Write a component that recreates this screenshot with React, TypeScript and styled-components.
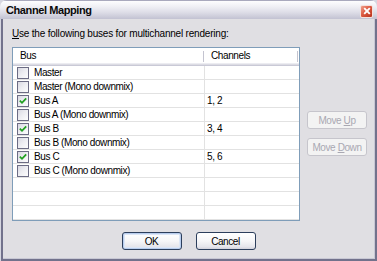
import React, { FC } from 'react';
import styled, { createGlobalStyle } from 'styled-components';

const GlobalStyle = createGlobalStyle`
    html, body {
        margin: 0;
        padding: 0;
        background: #d6d6e0;
    }

    body {
        font-family: 'Liberation Sans', Arial, sans-serif;
        font-size: 10px;
        letter-spacing: -0.4px;
        color: #000;
    }
`;

const Window = styled.div`
    width: 377px;
    height: 261px;
    display: flex;
    flex-direction: column;
    border-radius: 7px 7px 0 0;
    overflow: hidden;
    background: #d6d6e0;
`;

const TitleBar = styled.div`
    flex: none;
    height: 19px;
    box-sizing: border-box;
    display: flex;
    align-items: center;
    justify-content: space-between;
    padding: 0 4px 0 6px;
    border-top: 1px solid #a9a9bd;
    background: linear-gradient(#fdfdfe 0%, #f0f0f5 30%, #dcdce6 65%, #c2c2d2 100%);
`;

const Title = styled.span`
    font-weight: bold;
    font-size: 11px;
    letter-spacing: -0.4px;
    color: #0a0a0a;
`;

const CloseButton = styled.div`
    width: 13px;
    height: 13px;
    margin-top: 2px;
    box-sizing: border-box;
    border: 1px solid #f4e0dc;
    border-radius: 2px;
    background: linear-gradient(135deg, #f0a08c 0%, #dc5a42 45%, #b8321c 100%);
    display: flex;
    align-items: center;
    justify-content: center;
`;

const Frame = styled.div`
    flex: 1;
    display: flex;
    margin-left: 1px;
    border: solid #72728c;
    border-width: 0 2px 2px 2px;
    padding: 0 1px 1px 0;
    background: #c8c8d4;
`;

const Client = styled.div`
    flex: 1;
    display: flex;
    flex-direction: column;
    background: #e0dfe3;
`;

const Content = styled.div`
    padding: 8px 0 0 9px;
`;

const Label = styled.div`
    height: 14px;
    line-height: 14px;
    margin-bottom: 6px;
    letter-spacing: -0.2px;
`;

const MainRow = styled.div`
    display: flex;
    align-items: flex-start;
`;

const List = styled.div`
    width: 288px;
    height: 174px;
    box-sizing: border-box;
    border: 1px solid #7f9db9;
    background: #fff;
    overflow: hidden;
`;

const Header = styled.div`
    display: flex;
    height: 18px;
    background: #fff;
    box-shadow: inset 0 -1px #c9c9d6, inset 0 -2px #dcdce4, inset 0 -3px #ececf1;
`;

const HeaderCell = styled.div<{ width: number; pad: number }>`
    position: relative;
    width: ${({ width }): number => width}px;
    box-sizing: border-box;
    padding-left: ${({ pad }): number => pad}px;
    line-height: 16px;

    &::after {
        content: '';
        position: absolute;
        right: 1px;
        top: 3px;
        height: 11px;
        width: 1px;
        background: #c4c4d0;
    }
`;

const Row = styled.div`
    display: flex;
    height: 14px;
    box-sizing: border-box;
    border-bottom: 1px solid #e2e2e2;
`;

const Cell = styled.div<{ width: number }>`
    width: ${({ width }): number => width}px;
    box-sizing: border-box;
    display: flex;
    align-items: center;
    line-height: 13px;
    white-space: nowrap;
`;

const BusCell = styled(Cell)`
    padding-left: 4px;
    border-right: 1px solid #e2e2e2;
`;

const ChannelCell = styled(Cell)`
    padding-left: 2px;
`;

const CheckBox = styled.div`
    width: 12px;
    height: 12px;
    box-sizing: border-box;
    margin-right: 5px;
    border: 1px solid #6c6c84;
    background: linear-gradient(135deg, #d9d9e2 0%, #eeeef2 50%, #fdfdfd 100%);
    display: flex;
    align-items: center;
    justify-content: center;
`;

const SideButtons = styled.div`
    display: flex;
    flex-direction: column;
    gap: 9px;
    margin-left: 7px;
    padding-top: 64px;
`;

const Button = styled.div<{ disabled?: boolean; primary?: boolean }>`
    width: 60px;
    height: 18px;
    box-sizing: border-box;
    display: flex;
    align-items: center;
    justify-content: center;
    white-space: nowrap;
    border-radius: 3px;
    border: 1px solid ${({ disabled }): string => (disabled ? '#c6c5cc' : '#2c3e5c')};
    color: ${({ disabled }): string => (disabled ? '#a9a8b2' : '#000')};
    background: ${({ disabled }): string =>
        disabled ? '#f3f3f3' : 'linear-gradient(#ffffff 0%, #f6f6f8 50%, #e6e6ec 85%, #d2d2dc 100%)'};
    box-shadow: ${({ primary }): string => (primary ? 'inset 0 0 0 1px #b8cdee, inset 0 0 0 2px #dce6f6' : 'none')};

    u {
        text-decoration-thickness: 1px;
        text-underline-offset: 1px;
    }
`;

const ButtonRow = styled.div`
    display: flex;
    justify-content: center;
    gap: 14px;
    margin-top: 11px;
`;

type Bus = { name: string; checked: boolean; channels: string };

const buses: Bus[] = [
    { name: 'Master', checked: false, channels: '' },
    { name: 'Master (Mono downmix)', checked: false, channels: '' },
    { name: 'Bus A', checked: true, channels: '1, 2' },
    { name: 'Bus A (Mono downmix)', checked: false, channels: '' },
    { name: 'Bus B', checked: true, channels: '3, 4' },
    { name: 'Bus B (Mono downmix)', checked: false, channels: '' },
    { name: 'Bus C', checked: true, channels: '5, 6' },
    { name: 'Bus C (Mono downmix)', checked: false, channels: '' },
];

const Check: FC = () => (
    <svg width="8" height="8" viewBox="0 0 8 8">
        <path d="M0.8 3.6 L3 5.8 L7.2 1.4" fill="none" stroke="#21a121" strokeWidth="1.8" />
    </svg>
);

const CloseX: FC = () => (
    <svg width="8" height="8" viewBox="0 0 8 8">
        <path d="M1.2 1.2 L6.8 6.8 M6.8 1.2 L1.2 6.8" stroke="#fff" strokeWidth="1.9" />
    </svg>
);

const App: FC = () => (
    <>
        <GlobalStyle />
        <Window>
            <TitleBar>
                <Title>Channel Mapping</Title>
                <CloseButton>
                    <CloseX />
                </CloseButton>
            </TitleBar>
            <Frame>
                <Client>
                    <Content>
                        <Label>
                            <u>U</u>se the following buses for multichannel rendering:
                        </Label>
                        <MainRow>
                            <List>
                                <Header>
                                    <HeaderCell width={192} pad={7}>
                                        Bus
                                    </HeaderCell>
                                    <HeaderCell width={94} pad={6}>
                                        Channels
                                    </HeaderCell>
                                </Header>
                                {buses.map(({ name, checked, channels }) => (
                                    <Row key={name}>
                                        <BusCell width={192}>
                                            <CheckBox>{checked && <Check />}</CheckBox>
                                            {name}
                                        </BusCell>
                                        <ChannelCell width={94}>{channels}</ChannelCell>
                                    </Row>
                                ))}
                                {[0, 1, 2].map((i) => (
                                    <Row key={`empty-${i}`}>
                                        <BusCell width={192} />
                                        <ChannelCell width={94} />
                                    </Row>
                                ))}
                            </List>
                            <SideButtons>
                                <Button disabled>
                                    <span>
                                        Move <u>U</u>p
                                    </span>
                                </Button>
                                <Button disabled>
                                    <span>
                                        Move <u>D</u>own
                                    </span>
                                </Button>
                            </SideButtons>
                        </MainRow>
                    </Content>
                    <ButtonRow>
                        <Button primary>OK</Button>
                        <Button>Cancel</Button>
                    </ButtonRow>
                </Client>
            </Frame>
        </Window>
    </>
);

export default App;
